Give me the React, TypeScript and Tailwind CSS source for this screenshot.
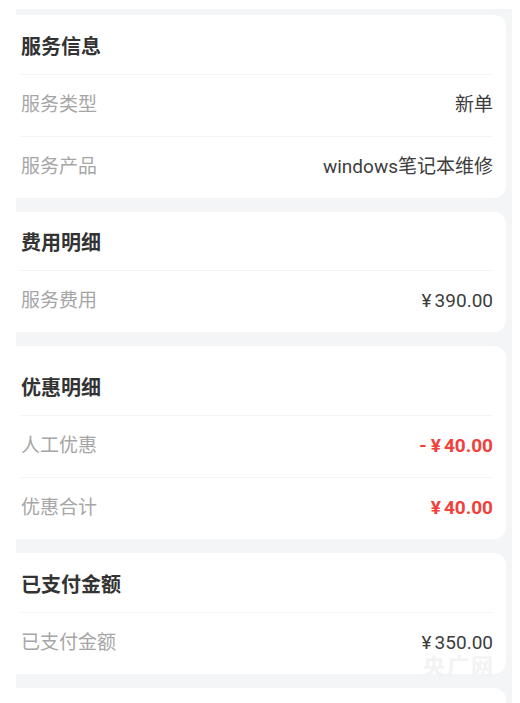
import React from "react";

type Row = { label: string; value: string; red?: boolean };

interface SectionProps {
  title: string;
  rows: Row[];
  titleClass?: string;
}

const font = { fontFamily: 'Roboto, "Noto Sans CJK SC", sans-serif' };

function Money({ text }: { text: string }) {
  // yen sign (and minus) sit a touch apart from the digits
  const i = text.indexOf("¥");
  if (i < 0) return <>{text}</>;
  const neg = text.startsWith("-");
  return (
    <>
      {neg && <span className="mr-[4px]">-</span>}
      <span className="mr-[3px]">¥</span>
      {text.slice(i + 1)}
    </>
  );
}

function Section({ title, rows, titleClass = "h-[59px] pt-1" }: SectionProps) {
  return (
    <div className="bg-white rounded-r-[12px] pl-[5px] pr-[13px]">
      <div className={`flex items-center ${titleClass}`}>
        <h3 className="text-[20px] font-bold text-[#333333] leading-none">{title}</h3>
      </div>
      {rows.map((row) => (
        <div
          key={row.label}
          className="h-[62px] border-t border-[#f3f3f5] flex items-center justify-between pb-[2px]"
        >
          <span className="text-[19px] text-[#a6a6a6] leading-none">{row.label}</span>
          <span
            className={
              row.red
                ? "text-[19px] font-bold text-[#f2403a] leading-none"
                : "text-[19px] text-[#3d3d3d] leading-none"
            }
          >
            <Money text={row.value} />
          </span>
        </div>
      ))}
    </div>
  );
}

export default function App() {
  return (
    <div className="relative bg-white h-[703px] overflow-hidden pl-4 pr-2 pt-[9px]" style={font}>
      <div className="bg-[#f4f5f7] pt-[6px] pr-[6px] flex flex-col gap-[14px] h-full">
        <Section
          title="服务信息"
          rows={[
            { label: "服务类型", value: "新单" },
            { label: "服务产品", value: "windows笔记本维修" },
          ]}
        />
        <Section title="费用明细" rows={[{ label: "服务费用", value: "¥390.00" }]} titleClass="h-[58px] pt-[3px]" />
        <Section
          title="优惠明细"
          titleClass="h-[69px] pt-[14px]"
          rows={[
            { label: "人工优惠", value: "-¥40.00", red: true },
            { label: "优惠合计", value: "¥40.00", red: true },
          ]}
        />
        <Section title="已支付金额" rows={[{ label: "已支付金额", value: "¥350.00" }]} />
        <div className="bg-white rounded-tr-[12px] flex-1" />
      </div>

      {/* faint watermark */}
      <div className="absolute left-[423px] top-[656px] text-[22px] font-bold text-[#f3f3f3] tracking-[2px] leading-none select-none">
        央广网
      </div>
    </div>
  );
}
